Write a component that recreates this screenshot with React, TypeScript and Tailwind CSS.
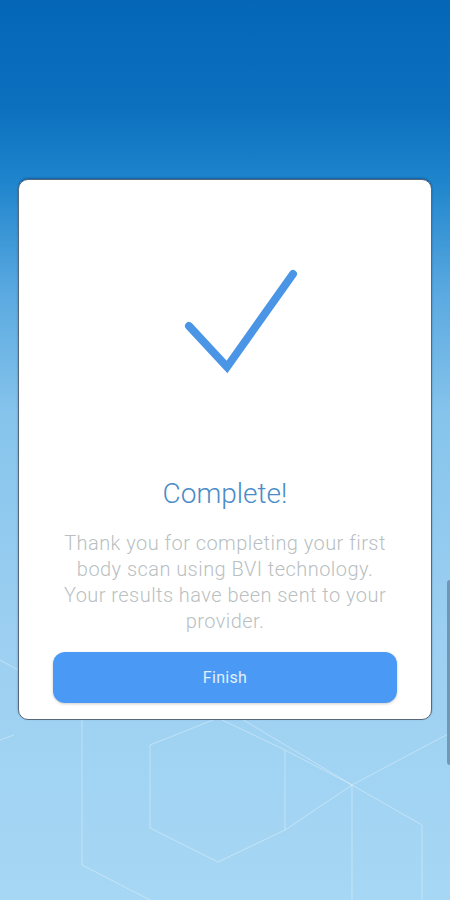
import React from "react";

function Hexes() {
  return (
    <svg
      className="absolute inset-0 h-full w-full"
      viewBox="0 0 450 900"
      preserveAspectRatio="none"
      fill="none"
      stroke="#ffffff"
      strokeOpacity="0.35"
      strokeWidth="1"
    >
      <path d="M150 745 L218 718 L285 750 L285 830 L218 862 L150 828 Z" />
      <path d="M82 720 L82 865 L150 900" />
      <path d="M0 660 L82 705 L82 720" />
      <path d="M0 740 L14 735" />
      <path d="M285 750 L352 785 L352 900" />
      <path d="M285 830 L352 785 L450 733" />
      <path d="M240 718 L352 785 L422 825 L422 900" />
    </svg>
  );
}

export default function App() {
  return (
    <div
      className="relative h-[900px] w-[450px] overflow-hidden bg-[linear-gradient(180deg,#0566b8_0%,#0c70bf_12%,#1e84cc_20%,#58a8e0_32%,#86c4ec_46%,#9ccff1_70%,#a6d7f4_100%)]"
      style={{ fontFamily: "Roboto, 'Noto Sans', sans-serif" }}
    >
      <Hexes />
      <div className="absolute right-0 top-[580px] h-[185px] w-[3px] rounded-l bg-[#5c7f9c]/70" />

      <div className="relative px-[18px] pt-[179px]">
        <div className="flex h-[541px] flex-col items-center rounded-[10px] border border-[#56687a] bg-white px-[34px] pb-[16px] shadow-[0_-1px_2px_rgba(0,40,100,0.4)]">
          <svg className="-mx-[34px] block h-[200px] w-[413px] shrink-0" viewBox="0 0 413 200">
            <path
              d="M170 146 L208 187 L274 94"
              stroke="#4a95e6"
              strokeWidth="8"
              strokeLinecap="round"
              strokeLinejoin="miter"
              fill="none"
            />
          </svg>
          <h1 className="mt-[97px] text-center text-[28px] font-light leading-[34px] text-[#4a8cc6]">
            Complete!
          </h1>
          <p className="mt-[19px] text-center text-[20px] font-light leading-[26px] tracking-[0.45px] text-[#b9bfc2]">
            Thank you for completing your first
            <br />
            body scan using BVI technology.
            <br />
            Your results have been sent to your
            <br />
            provider.
          </p>
          <button className="mt-[18px] h-[51px] w-full rounded-[12px] bg-[#4a9af5] text-[16px] tracking-[0.3px] text-[#e3eefb] shadow-[0_1px_3px_rgba(0,0,0,0.2)]">
            Finish
          </button>
        </div>
      </div>
    </div>
  );
}
